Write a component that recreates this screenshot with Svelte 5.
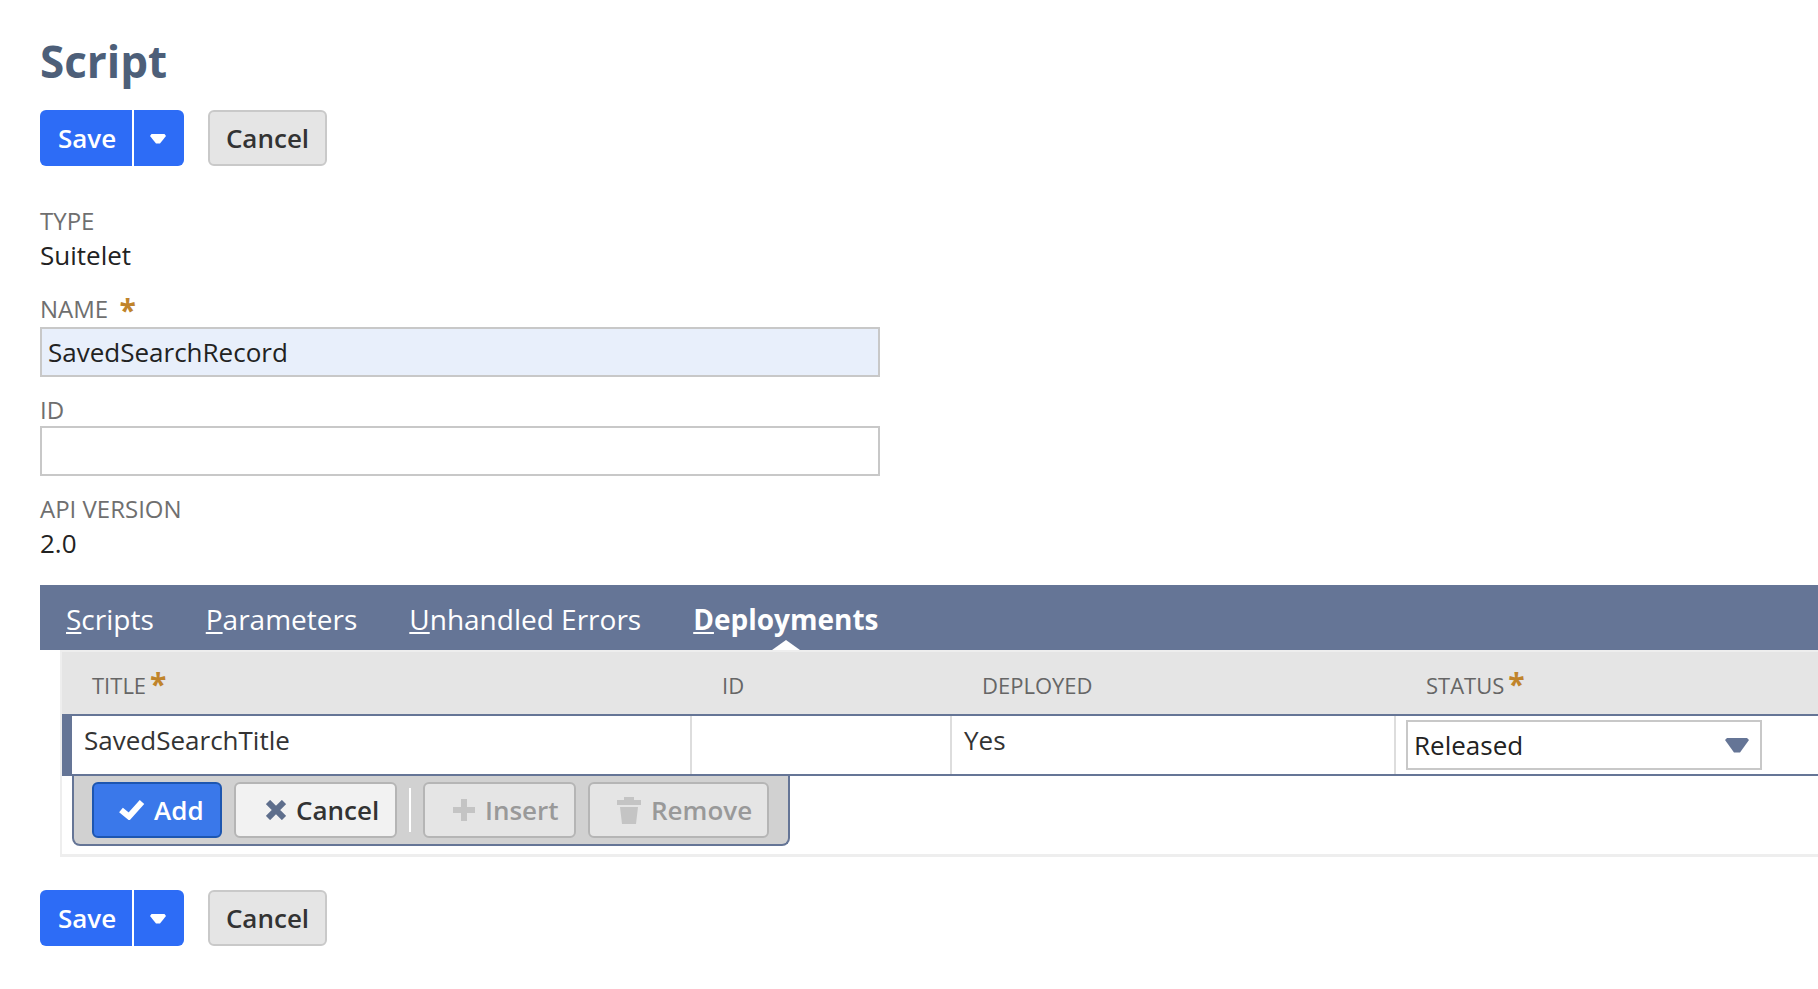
<script>
  const columns = [
    { label: 'TITLE', required: true },
    { label: 'ID' },
    { label: 'DEPLOYED' },
    { label: 'STATUS', required: true }
  ];
  const tabs = [
    { key: 'S', rest: 'cripts' },
    { key: 'P', rest: 'arameters' },
    { key: 'U', rest: 'nhandled Errors' },
    { key: 'D', rest: 'eployments', active: true }
  ];
</script>

{#snippet actions()}
  <div class="actions">
    <div class="split">
      <button class="save">Save</button>
      <button class="more" aria-label="More">
        <svg width="16" height="10" viewBox="0 0 16 10"><path d="M0 2 1.500 0h13L16 2 10 9.500H6z" fill="#fff" /></svg>
      </button>
    </div>
    <button class="cancel">Cancel</button>
  </div>
{/snippet}

<div class="page">
  <h1>Script</h1>
  {@render actions()}

  <div class="fields">
    <div class="label">TYPE</div>
    <div class="value">Suitelet</div>

    <div class="label name">NAME <span class="req wide">*</span></div>
    <div class="input focus">SavedSearchRecord</div>

    <div class="label id">ID</div>
    <div class="input"></div>

    <div class="label api">API VERSION</div>
    <div class="value">2.0</div>
  </div>

  <div class="tabs">
    {#each tabs as tab}
      <div class="tab" class:active={tab.active}><u>{tab.key}</u>{tab.rest}</div>
    {/each}
  </div>

  <div class="sublist">
    <div class="head">
      {#each columns as col}
        <div class="th">{col.label}{#if col.required}<span class="req">*</span>{/if}</div>
      {/each}
    </div>
    <div class="row">
      <div class="td first">SavedSearchTitle</div>
      <div class="td"></div>
      <div class="td">Yes</div>
      <div class="td last">
        <div class="select">
          <span>Released</span>
          <svg width="24" height="15" viewBox="0 0 24 15"><path d="M0 2 2 0h20l2 2-9 12.500h-6z" fill="#657596" /></svg>
        </div>
      </div>
    </div>
    <div class="toolbar">
      <button class="tool add">
        <svg width="26" height="20" viewBox="0 0 26 20"><path d="M2 10l8 6.500L23 2" fill="none" stroke="#fff" stroke-width="6" /></svg>
        Add
      </button>
      <button class="tool undo">
        <svg width="20" height="20" viewBox="0 0 20 20"><path d="M2 2l16 16M18 2L2 18" fill="none" stroke="#5e6e8c" stroke-width="6" /></svg>
        Cancel
      </button>
      <span class="sep"></span>
      <button class="tool off ins">
        <svg width="22" height="22" viewBox="0 0 22 22"><path d="M11 0v22M0 11h22" stroke="#c4c4c4" stroke-width="6" /></svg>
        Insert
      </button>
      <button class="tool off rem">
        <svg width="24" height="27" viewBox="0 0 24 27"><path d="M7 0h10v3h7v5H0V3h7zM3 10h18l-2 17H5z" fill="#c4c4c4" /></svg>
        Remove
      </button>
    </div>
  </div>

  {@render actions()}
</div>

<style>
  :global(body) {
    margin: 0;
    background: #fff;
    overflow: hidden;
  }

  .page {
    height: 989px;
    padding: 32px 0 0 40px;
    box-sizing: border-box;
    font-family: "Open Sans", sans-serif;
    color: #222;
  }

  h1 {
    margin: 0 0 20px;
    height: 58px;
    font-size: 44px;
    line-height: 58px;
    font-weight: 700;
    color: #4d5f79;
  }

  .actions {
    display: flex;
    gap: 24px;
    height: 56px;
  }

  button {
    font-family: inherit;
    font-size: 26px;
    padding: 0;
    box-sizing: border-box;
  }

  .split {
    display: flex;
    width: 144px;
    border-radius: 6px;
    overflow: hidden;
    background: #2d6cf6;
  }

  .save,
  .more {
    border: none;
    background: none;
    color: #fff;
    font-weight: 600;
  }

  .save {
    width: 92px;
    padding-left: 2px;
  }

  .more {
    width: 52px;
    display: flex;
    align-items: center;
    justify-content: center;
    padding: 2px 2px 0 0;
    border-left: 2px solid #fff;
  }

  .cancel {
    width: 119px;
    border: 2px solid #c9c9c9;
    border-radius: 6px;
    background: #e5e5e5;
    color: #333;
    font-weight: 600;
  }

  .fields {
    width: 840px;
    height: 419px;
    box-sizing: border-box;
    padding-top: 39px;
  }

  .label {
    font-size: 24px;
    line-height: 32px;
    color: #6f6f6f;
  }

  .label.name {
    margin-top: 20px;
    height: 34px;
  }

  .label.id {
    margin-top: 17px;
  }

  .label.api {
    margin-top: 17px;
  }

  .value {
    font-size: 26px;
    line-height: 36px;
    color: #222;
  }

  .input {
    height: 50px;
    box-sizing: border-box;
    border: 2px solid #c8c8c8;
    padding: 0 6px;
    font-size: 26px;
    line-height: 46px;
    color: #222;
  }

  .input.focus {
    background: #e8effb;
  }

  .req {
    color: #c0842b;
    font-weight: 700;
    font-size: 30px;
    line-height: 20px;
    margin-left: 4px;
    vertical-align: -1px;
  }

  .req.wide {
    margin-left: 5px;
    vertical-align: -3px;
  }

  .tabs {
    display: flex;
    height: 65px;
    padding-left: 26px;
    gap: 52px;
    background: #657596;
    align-items: flex-start;
    color: #fff;
    font-size: 28px;
  }

  .tab {
    position: relative;
    height: 65px;
    line-height: 69px;
  }

  .tab.active {
    font-weight: 700;
  }

  .tab.active::after {
    content: "";
    position: absolute;
    left: 50%;
    bottom: 0;
    margin-left: -14px;
    border: 14px solid transparent;
    border-top: none;
    border-bottom: 10px solid #fff;
  }

  .sublist {
    margin-left: 20px;
    margin-bottom: 33px;
    border-left: 2px solid #eee;
    border-top: 2px solid #eee;
    border-bottom: 3px solid #eee;
    height: 207px;
    box-sizing: border-box;
  }

  .head,
  .row {
    display: grid;
  }

  .head {
    grid-template-columns: 631px 260px 444px 1fr;
    height: 62px;
    background: #e5e5e5;
  }

  .th {
    padding: 15px 0 0 29px;
    font-size: 22px;
    line-height: 36px;
    color: #666;
  }

  .th:first-child {
    padding-left: 30px;
  }

  .row {
    grid-template-columns: 620px 260px 444px 1fr;
    height: 62px;
    box-sizing: border-box;
    border-top: 2px solid #657596;
    border-bottom: 2px solid #657596;
    border-left: 10px solid #657596;
  }

  .td {
    border-right: 2px solid #ddd;
    padding: 7px 0 0 12px;
    font-size: 26px;
    line-height: 34px;
    color: #333;
  }

  .td.last {
    border-right: none;
    padding: 4px 0 0 10px;
  }

  .select {
    width: 356px;
    height: 50px;
    box-sizing: border-box;
    border: 2px solid #c8c8c8;
    display: flex;
    align-items: center;
    justify-content: space-between;
    padding: 0 11px 0 6px;
    font-size: 26px;
    color: #222;
  }

  .toolbar {
    margin-left: 10px;
    width: 718px;
    height: 70px;
    box-sizing: border-box;
    display: flex;
    align-items: flex-start;
    gap: 12px;
    padding: 6px 0 0 18px;
    background: #d1d1d1;
    border: 2px solid #657596;
    border-top: none;
    border-radius: 0 0 8px 8px;
  }

  .tool {
    height: 56px;
    padding: 0 0 0 25px;
    display: flex;
    align-items: center;
    gap: 10px;
    border: 2px solid #b5b5b5;
    border-radius: 6px;
    background: #f2f2f2;
    color: #333;
    font-weight: 600;
  }

  .tool.add {
    width: 130px;
    gap: 9px;
    background: #3a78ea;
    border-color: #1d56b0;
    color: #fff;
  }

  .tool.undo {
    width: 163px;
    padding-left: 30px;
  }

  .tool.ins {
    width: 153px;
    padding-left: 28px;
  }

  .tool.rem {
    width: 181px;
    padding-left: 27px;
  }

  .tool.off {
    background: #e5e5e5;
    color: #999;
  }

  .sep {
    width: 2px;
    height: 44px;
    margin-top: 6px;
    background: #fff;
  }
</style>
